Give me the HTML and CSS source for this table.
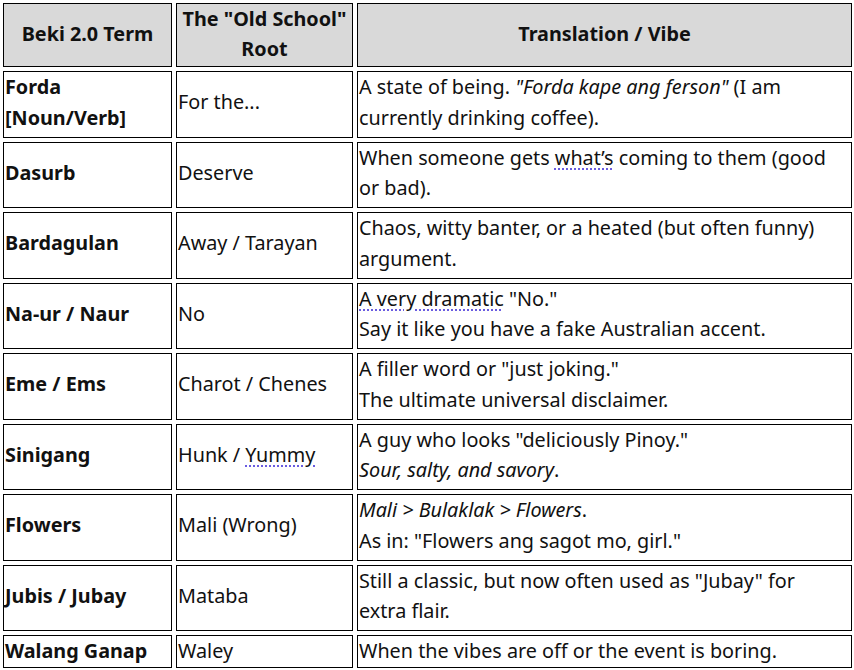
FILE: index.html
```html
<!DOCTYPE html>
<html lang="en">
<head>
<meta charset="utf-8">
<title>Beki 2.0 Terms</title>
<link rel="stylesheet" href="styles.css">
</head>
<body>
<table class="glossary">
  <colgroup>
    <col class="c-term">
    <col class="c-root">
    <col class="c-vibe">
  </colgroup>
  <thead>
    <tr>
      <th>Beki 2.0 Term</th>
      <th>The "Old School" Root</th>
      <th>Translation / Vibe</th>
    </tr>
  </thead>
  <tbody>
    <tr>
      <td class="term">Forda [Noun/Verb]</td>
      <td>For the...</td>
      <td class="vibe">A state of being. <em>"Forda kape ang ferson"</em> (I am currently drinking coffee).</td>
    </tr>
    <tr>
      <td class="term">Dasurb</td>
      <td>Deserve</td>
      <td class="vibe">When someone gets <span class="spell">what’s</span> coming to them (good or bad).</td>
    </tr>
    <tr>
      <td class="term">Bardagulan</td>
      <td>Away / Tarayan</td>
      <td class="vibe">Chaos, witty banter, or a heated (but often funny) argument.</td>
    </tr>
    <tr>
      <td class="term">Na-ur / Naur</td>
      <td>No</td>
      <td class="vibe"><span class="spell">A very dramatic</span> "No."<br>Say it like you have a fake Australian accent.</td>
    </tr>
    <tr>
      <td class="term">Eme / Ems</td>
      <td>Charot / Chenes</td>
      <td class="vibe">A filler word or "just joking."<br>The ultimate universal disclaimer.</td>
    </tr>
    <tr>
      <td class="term">Sinigang</td>
      <td>Hunk / <span class="spell">Yummy</span></td>
      <td class="vibe">A guy who looks "deliciously Pinoy."<br><em>Sour, salty, and savory</em>.</td>
    </tr>
    <tr>
      <td class="term">Flowers</td>
      <td>Mali (Wrong)</td>
      <td class="vibe"><em>Mali &gt; Bulaklak &gt; Flowers</em>.<br>As in: "Flowers ang sagot mo, girl."</td>
    </tr>
    <tr>
      <td class="term">Jubis / Jubay</td>
      <td>Mataba</td>
      <td class="vibe">Still a classic, but now often used as "Jubay" for extra flair.</td>
    </tr>
    <tr class="last">
      <td class="term">Walang Ganap</td>
      <td>Waley</td>
      <td class="vibe">When the vibes are off or the event is boring.</td>
    </tr>
  </tbody>
</table>
</body>
</html>
```
FILE: styles.css
```css
html, body {
  margin: 0;
  padding: 0;
  background: #ffffff;
}

body {
  font-family: "Noto Sans", "Open Sans", sans-serif;
  font-size: 19.8px;
  color: #111111;
}

.glossary {
  border-collapse: separate;
  border-spacing: 4px;
  table-layout: fixed;
  width: 857px;
  margin: -1px 0 0 -1px;
}

.c-term { width: 169px; }
.c-root { width: 177px; }
.c-vibe { width: 495px; }

.glossary th,
.glossary td {
  border: 1px solid #000000;
  vertical-align: middle;
}

.glossary th {
  background: #d9d9d9;
  font-weight: 700;
  text-align: center;
  padding: 0 1px 3px;
  line-height: 29.5px;
}

.glossary td {
  text-align: left;
  padding: 0 1px 3px;
  line-height: 30.75px;
}

.glossary tr.last td {
  padding-bottom: 0;
}

.glossary td.vibe {
  padding-right: 14px;
}

.glossary td.term {
  font-weight: 700;
}

.glossary em {
  font-style: italic;
}

.spell {
  text-decoration: underline dotted #6a5ce0;
  text-decoration-thickness: 2px;
  text-underline-offset: 4px;
}
```
